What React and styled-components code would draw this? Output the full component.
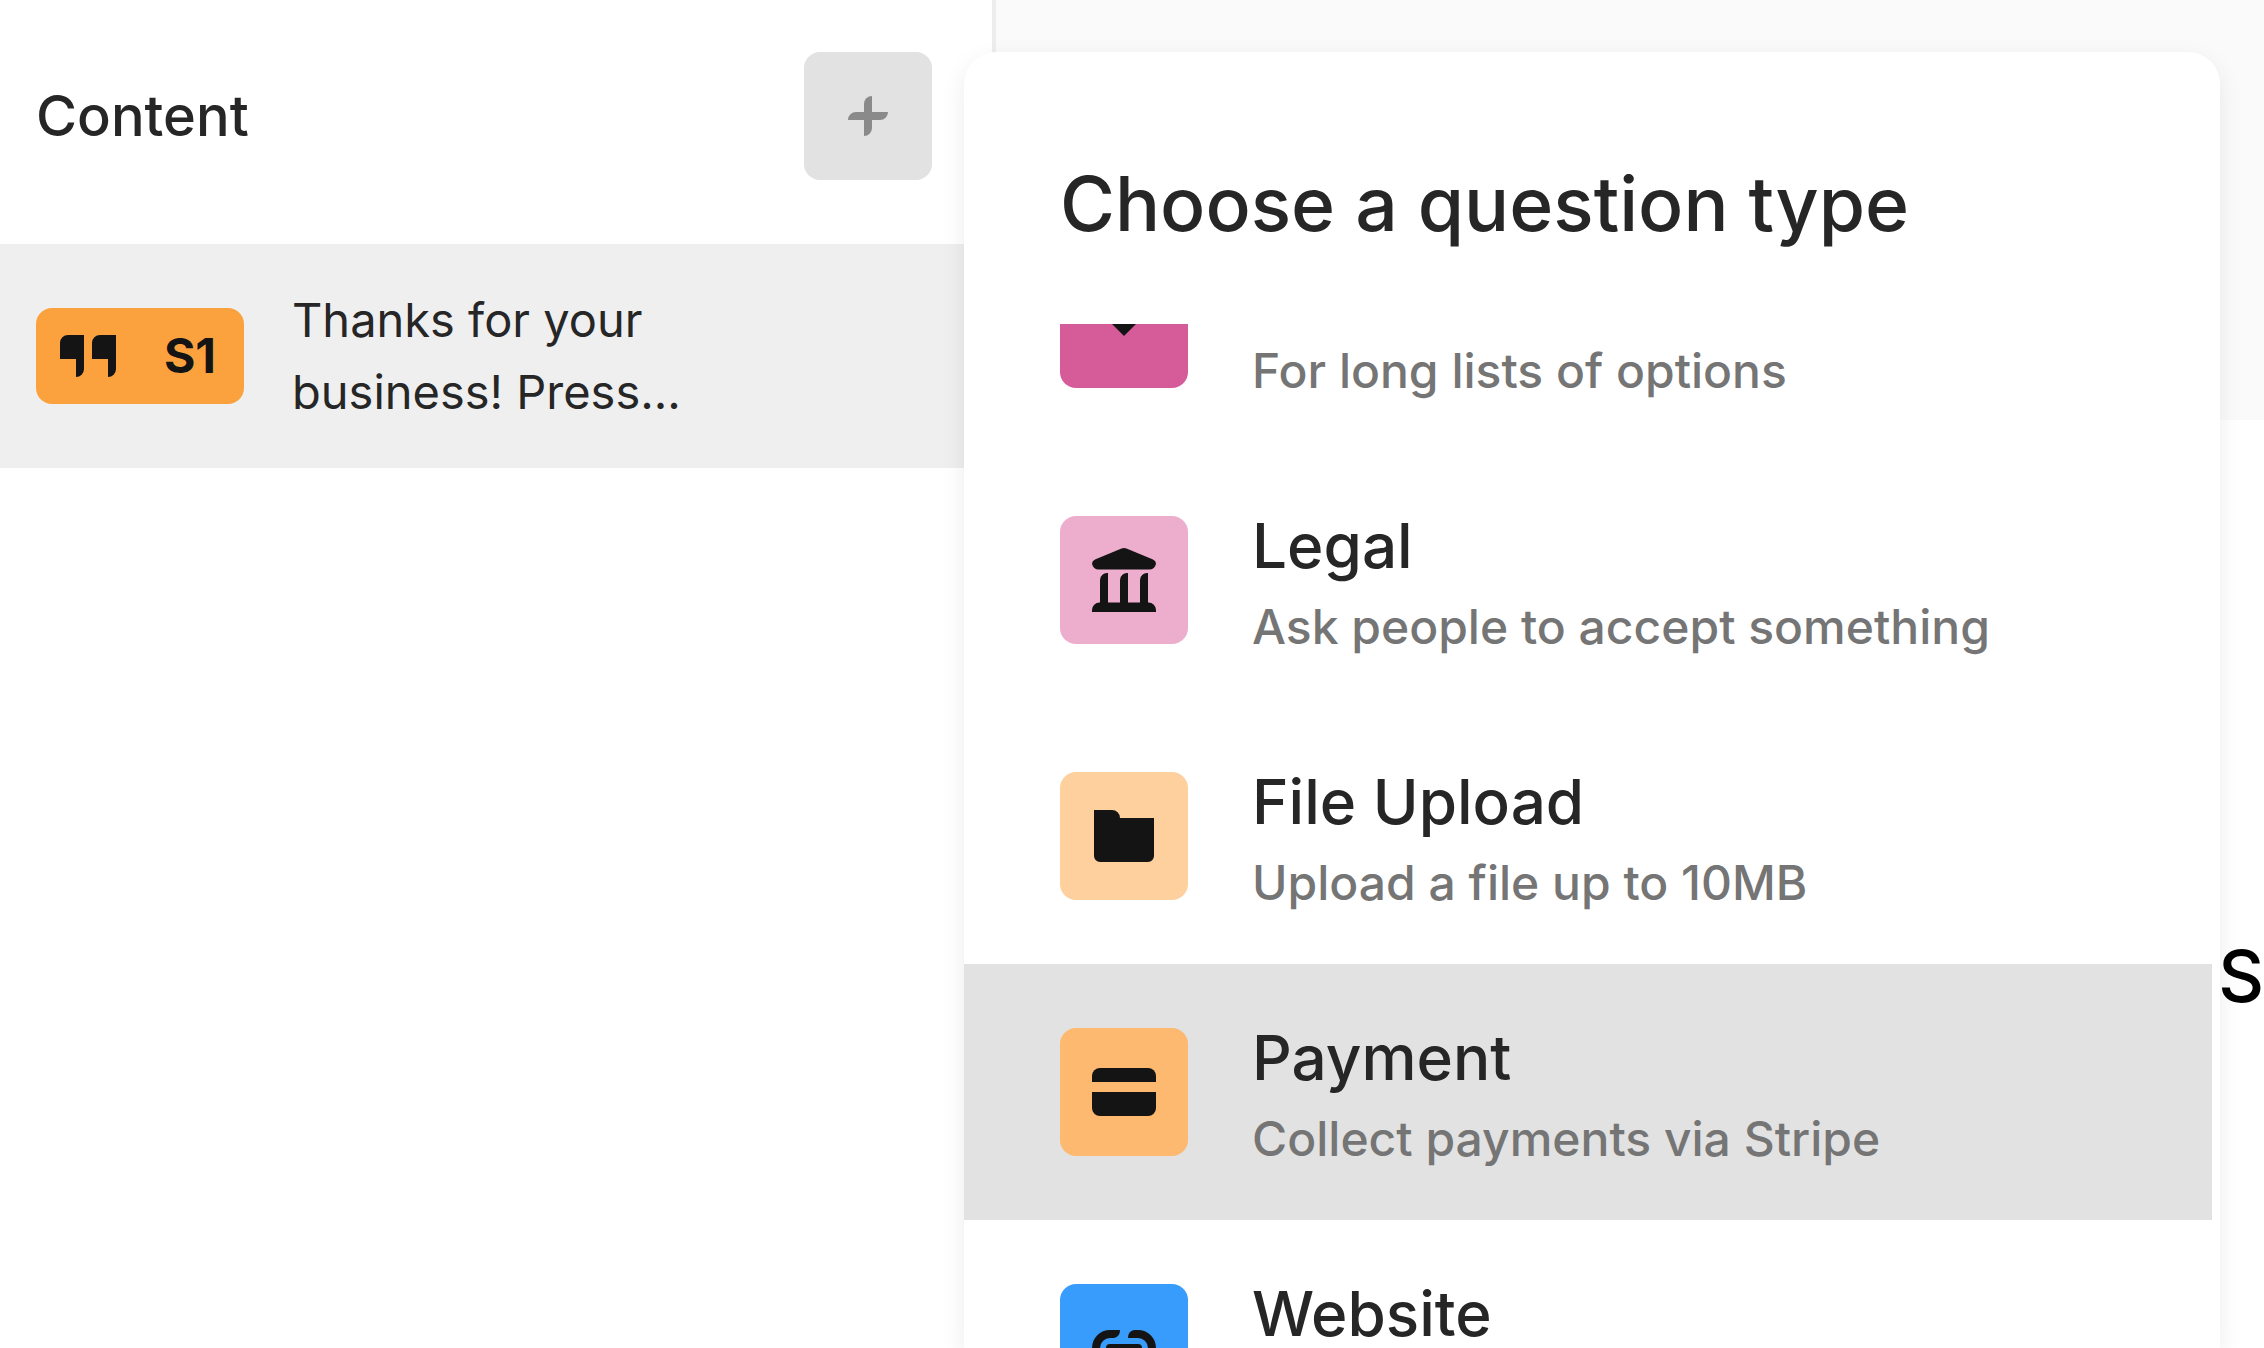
import React, { useLayoutEffect, useRef } from "react";
import styled, { createGlobalStyle } from "styled-components";

const GlobalStyle = createGlobalStyle`
  *, *::before, *::after { box-sizing: border-box; }
  body {
    margin: 0;
    background: #ffffff;
    color: #262627;
    font-family: Inter, "Liberation Sans", sans-serif;
    overflow: hidden;
  }
  button { font: inherit; color: inherit; }
  h1, h2, p, ul { margin: 0; padding: 0; }
`;

const Layout = styled.div`
  position: relative;
  display: flex;
  height: 100vh;
  overflow: hidden;
`;

const Sidebar = styled.aside`
  flex: 0 0 44%;
  border-right: 4px solid #ededed;
`;

const SidebarHeader = styled.header`
  display: flex;
  align-items: center;
  justify-content: space-between;
  padding: 52px 60px 64px 36px;
`;

const SidebarTitle = styled.h1`
  font-size: 56px;
  line-height: 72px;
  font-weight: 500;
`;

const AddButton = styled.button`
  display: grid;
  place-items: center;
  width: 128px;
  height: 128px;
  padding: 0;
  border: 0;
  border-radius: 16px;
  background: #e2e2e2;
  color: #8a8a8a;
`;

const ContentItem = styled.button`
  display: flex;
  align-items: center;
  gap: 48px;
  width: 100%;
  padding: 40px 36px;
  border: 0;
  background: #efefef;
  text-align: left;
`;

const Chip = styled.span`
  flex: none;
  display: flex;
  align-items: center;
  justify-content: space-between;
  width: 208px;
  height: 96px;
  padding: 0 28px 0 24px;
  border-radius: 16px;
  background: #fba23f;
  color: #141414;
  font-size: 48px;
  line-height: 72px;
  font-weight: 700;
`;

const ContentText = styled.span`
  max-width: 424px;
  font-size: 47px;
  line-height: 72px;
`;

const Main = styled.main`
  flex: 1;
  min-width: 0;
`;

const Toolbar = styled.div`
  height: 420px;
  background: #fafafa;
`;

const Preview = styled.div`
  display: flex;
  justify-content: flex-end;
  padding-top: 512px;
  color: #000000;
  font-size: 71px;
  line-height: 88px;
  font-weight: 500;
`;

const Popover = styled.section`
  position: absolute;
  top: 52px;
  bottom: 0;
  left: 964px;
  right: 44px;
  display: flex;
  flex-direction: column;
  border-radius: 32px 32px 0 0;
  background: #ffffff;
  box-shadow: 0 8px 24px rgba(0, 0, 0, 0.08);
`;

const PopoverTitle = styled.h2`
  padding: 104px 96px 72px;
  font-size: 75px;
  line-height: 96px;
  font-weight: 500;
`;

const TypeList = styled.ul`
  flex: 1;
  min-height: 0;
  margin-right: 8px;
  overflow-y: auto;
  list-style: none;
  scrollbar-width: none;
`;

const TypeButton = styled.button`
  display: flex;
  align-items: center;
  gap: 64px;
  width: 100%;
  height: 256px;
  padding: 0 96px;
  border: 0;
  background: ${(p) => (p.$active ? "#e2e2e2" : "#ffffff")};
  text-align: left;
`;

const IconTile = styled.span`
  flex: none;
  display: grid;
  place-items: center;
  width: 128px;
  height: 128px;
  border-radius: 16px;
  background: ${(p) => p.$color};
  color: #141414;
`;

const TypeText = styled.span`
  display: flex;
  flex-direction: column;
  white-space: nowrap;
`;

const TypeName = styled.span`
  font-size: 62px;
  line-height: 94px;
  font-weight: 500;
`;

const TypeHint = styled.span`
  color: #757575;
  font-size: 48px;
  line-height: 68px;
  font-weight: 500;
`;

const Glyph = ({ w, h, children }) => (
  <svg width={w} height={h} viewBox={`0 0 ${w} ${h}`} fill="currentColor" aria-hidden="true">
    {children}
  </svg>
);

const PlusIcon = () => (
  <Glyph w={40} h={40}>
    <path d="M24 0V32a8 8 0 0 1-8 8V8a8 8 0 0 1 8-8Z" />
    <path d="M0 24a8 8 0 0 1 8-8H40a8 8 0 0 1-8 8Z" />
  </Glyph>
);

const QuoteIcon = () => (
  <Glyph w={56} h={42}>
    <path d="M8 0H24V34a8 8 0 0 1-8 8V24H0V8a8 8 0 0 1 8-8Z" />
    <path d="M40 0H56V34a8 8 0 0 1-8 8V24H32V8a8 8 0 0 1 8-8Z" />
  </Glyph>
);

const ChevronIcon = () => (
  <Glyph w={48} h={24}>
    <path d="M0 0H48L24 24Z" />
  </Glyph>
);

const LegalIcon = () => (
  <Glyph w={64} h={64}>
    <path d="M29.500 .5Q32-.5 34.500 .5L61 11.500Q64 13 64 15.500Q63 21.500 57 21.500H7Q1 21.500 0 15.500Q0 13 3 11.500Z" />
    <path d="M8 56V32a7 7 0 0 1 8-7V56ZM28 56V32a7 7 0 0 1 8-7V56ZM48 56V32a7 7 0 0 1 8-7V56Z" />
    <path d="M0 64V62a7.500 7.500 0 0 1 7.500-7.500H56.500a7.500 7.500 0 0 1 7.500 7.500V64Z" />
  </Glyph>
);

const FolderIcon = () => (
  <Glyph w={60} h={52}>
    <path d="M0 0H18a8 8 0 0 1 8 8H60V46a6 6 0 0 1-6 6H6a6 6 0 0 1-6-6Z" />
  </Glyph>
);

const CardIcon = () => (
  <Glyph w={64} h={48}>
    <path d="M0 14V8a8 8 0 0 1 8-8H56a8 8 0 0 1 8 8V14Z" />
    <path d="M0 24H64V40a8 8 0 0 1-8 8H8a8 8 0 0 1-8-8Z" />
  </Glyph>
);

const LinkIcon = () => (
  <Glyph w={64} h={36}>
    <path d="M28 0a8 8 0 0 1-6 8H18a10 10 0 0 0 0 20H22a8 8 0 0 1 6 8H18A18 18 0 0 1 18 0Z" />
    <path d="M36 8a8 8 0 0 1 6-8H46a18 18 0 0 1 0 36H36a8 8 0 0 1 6-8H46a10 10 0 0 0 0-20Z" />
    <rect x="14" y="14" width="36" height="8" rx="4" />
  </Glyph>
);

const TYPES = [
  { name: "Select list", hint: "For long lists of options", color: "#d65c99", Icon: ChevronIcon },
  { name: "Legal", hint: "Ask people to accept something", color: "#ecaecc", Icon: LegalIcon },
  { name: "File Upload", hint: "Upload a file up to 10MB", color: "#fed09e", Icon: FolderIcon },
  { name: "Payment", hint: "Collect payments via Stripe", color: "#feb970", Icon: CardIcon, active: true },
  { name: "Website", hint: "Ask for a web address", color: "#379cfb", Icon: LinkIcon },
];

export default function App() {
  const listRef = useRef(null);

  // Opens half a row down so that the highlighted type is in view.
  useLayoutEffect(() => {
    listRef.current.scrollTop = 128;
  }, []);

  return (
    <>
      <GlobalStyle />
      <Layout>
        <Sidebar>
          <SidebarHeader>
            <SidebarTitle>Content</SidebarTitle>
            <AddButton type="button" aria-label="Add question">
              <PlusIcon />
            </AddButton>
          </SidebarHeader>
          <ContentItem type="button">
            <Chip>
              <QuoteIcon />
              <span>S1</span>
            </Chip>
            <ContentText>Thanks for your business! Press...</ContentText>
          </ContentItem>
        </Sidebar>
        <Main>
          <Toolbar />
          <Preview>
            <p>S</p>
          </Preview>
        </Main>
        <Popover aria-labelledby="type-title">
          <PopoverTitle id="type-title">Choose a question type</PopoverTitle>
          <TypeList ref={listRef}>
            {TYPES.map(({ name, hint, color, Icon, active }) => (
              <li key={name}>
                <TypeButton type="button" $active={active}>
                  <IconTile $color={color}>
                    <Icon />
                  </IconTile>
                  <TypeText>
                    <TypeName>{name}</TypeName>
                    <TypeHint>{hint}</TypeHint>
                  </TypeText>
                </TypeButton>
              </li>
            ))}
          </TypeList>
        </Popover>
      </Layout>
    </>
  );
}
